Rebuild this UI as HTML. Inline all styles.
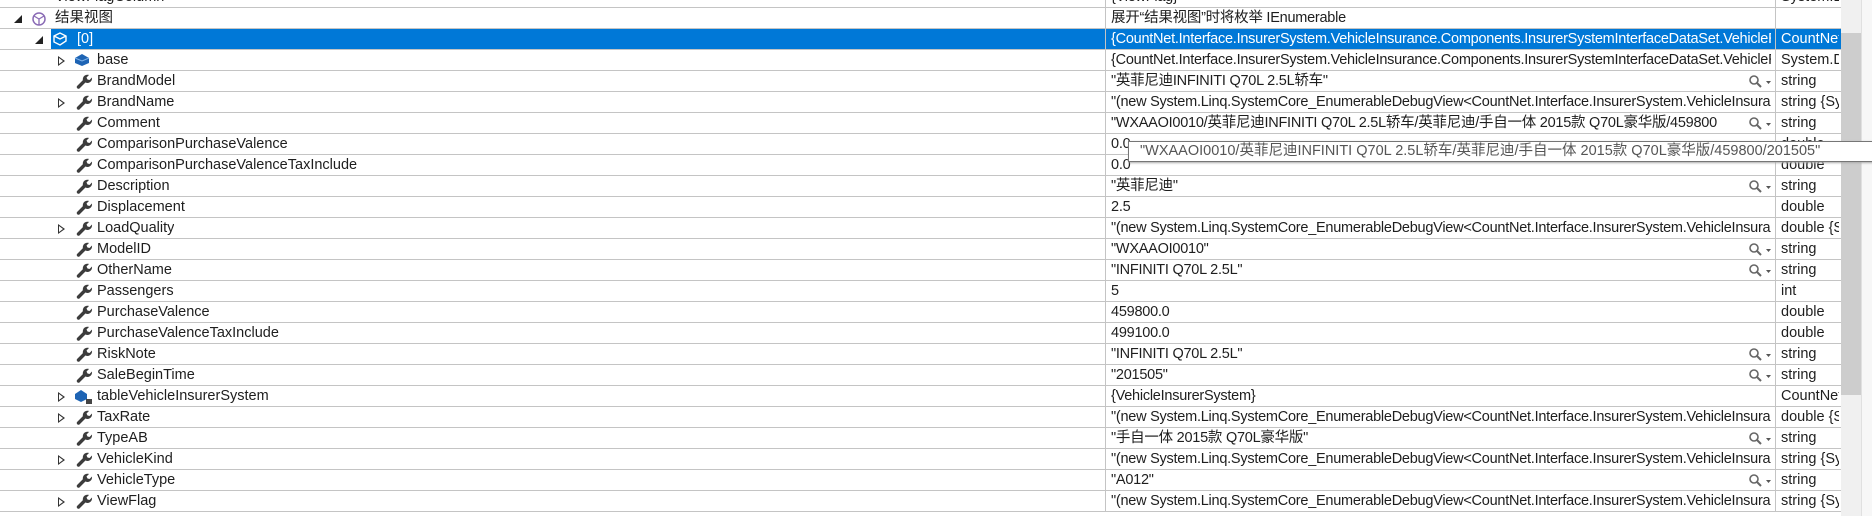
<!DOCTYPE html><html><head><meta charset="utf-8"><style>
body{margin:0;width:1872px;height:516px;overflow:hidden;background:#fff;font-family:"Liberation Sans","Noto Sans CJK SC",sans-serif;font-size:14.5px;color:#1e1e1e;position:relative}
.r{position:absolute;left:0;width:1841px;height:21px;border-bottom:1px solid #c4c4c4;box-sizing:border-box}
.r span{position:absolute;top:1px;height:18px;line-height:18px;white-space:nowrap;overflow:hidden}
.n{left:97px}.v{left:1111px;width:660px;letter-spacing:-0.25px}.t{left:1781px;width:58px}
.vl{position:absolute;top:0;height:512px;width:1px;background:#c4c4c4}
.tri{position:absolute;top:6px;width:0;height:0;border-top:5px solid transparent;border-bottom:5px solid transparent;border-left:7px solid #333}
.tri::after{content:"";position:absolute;left:-6px;top:-3px;border-top:3px solid transparent;border-bottom:3px solid transparent;border-left:4px solid #fff}
.ex{position:absolute;top:7px;width:0;height:0;border-left:8px solid transparent;border-bottom:8px solid #222}
.w{position:absolute;left:76px;top:2px}
.mg{position:absolute;left:1748px;top:3px}
.sel{background:#0078d7;color:#fff}
</style></head><body>
<div class="r" style="top:-13px"><span class="n" style="left:55px">ViewFlagColumn</span><span class="v">{ViewFlag}</span><span class="t">System.D</span></div>
<div id="rows"></div>
<div class="vl" style="left:1105px"></div><div class="vl" style="left:1775px"></div>
<div style="position:absolute;left:1841px;top:0;width:20px;height:516px;background:#f0f0f0"></div>
<div style="position:absolute;left:1841px;top:33px;width:20px;height:362px;background:#cdcdcd"></div>
<div style="position:absolute;left:1861px;top:0;width:11px;height:516px;background:#f7f7f7;border-left:1px solid #e0e0e0"></div>
<div style="position:absolute;left:1128px;top:141px;width:760px;height:21px;line-height:18px;background:#fff;border:1px solid #767676;color:#555;box-sizing:border-box;white-space:nowrap;padding:0 0 0 11px;box-shadow:1px 1px 2px #aaa">"WXAAOI0010/英菲尼迪INFINITI Q70L 2.5L轿车/英菲尼迪/手自一体 2015款 Q70L豪华版/459800/201505"</div>
<script>
const W='<svg class="w" width="17" height="16" viewBox="0 0 17 16"><path d="M2.5 14 L9 7.5" stroke="#3c3c3c" stroke-width="3.4" stroke-linecap="round"/><path d="M7 8 C6 4 9 1 13 2 L10.5 4.5 L11.5 6.5 L13.5 7 L16 4.5 C16.5 8.5 13 11 9.5 9.5Z" fill="#3c3c3c"/></svg>';
const M='<svg class="mg" width="26" height="14"><circle cx="6" cy="6" r="4" fill="none" stroke="#666" stroke-width="1.6"/><path d="M9 9 L13 13" stroke="#666" stroke-width="2"/><path d="M18 7 L23 7 L20.5 10Z" fill="#555"/></svg>';
const rows=[
['结果视图','展开“结果视图”时将枚举 IEnumerable','',0,'root'],
['[0]','{CountNet.Interface.InsurerSystem.VehicleInsurance.Components.InsurerSystemInterfaceDataSet.VehicleRow}','CountNet',0,'sel'],
['base','{CountNet.Interface.InsurerSystem.VehicleInsurance.Components.InsurerSystemInterfaceDataSet.VehicleRow}','System.Data',1,'base'],
['BrandModel','"英菲尼迪INFINITI Q70L 2.5L轿车"','string',0,'m'],
['BrandName','"(new System.Linq.SystemCore_EnumerableDebugView<CountNet.Interface.InsurerSystem.VehicleInsurance','string {System',1,''],
['Comment','"WXAAOI0010/英菲尼迪INFINITI Q70L 2.5L轿车/英菲尼迪/手自一体 2015款 Q70L豪华版/459800','string',0,'m'],
['ComparisonPurchaseValence','0.0','double',0,''],
['ComparisonPurchaseValenceTaxInclude','0.0','double',0,''],
['Description','"英菲尼迪"','string',0,'m'],
['Displacement','2.5','double',0,''],
['LoadQuality','"(new System.Linq.SystemCore_EnumerableDebugView<CountNet.Interface.InsurerSystem.VehicleInsurance','double {System',1,''],
['ModelID','"WXAAOI0010"','string',0,'m'],
['OtherName','"INFINITI Q70L 2.5L"','string',0,'m'],
['Passengers','5','int',0,''],
['PurchaseValence','459800.0','double',0,''],
['PurchaseValenceTaxInclude','499100.0','double',0,''],
['RiskNote','"INFINITI Q70L 2.5L"','string',0,'m'],
['SaleBeginTime','"201505"','string',0,'m'],
['tableVehicleInsurerSystem','{VehicleInsurerSystem}','CountNet',1,'tbl'],
['TaxRate','"(new System.Linq.SystemCore_EnumerableDebugView<CountNet.Interface.InsurerSystem.VehicleInsurance','double {System',1,''],
['TypeAB','"手自一体 2015款 Q70L豪华版"','string',0,'m'],
['VehicleKind','"(new System.Linq.SystemCore_EnumerableDebugView<CountNet.Interface.InsurerSystem.VehicleInsurance','string {System',1,''],
['VehicleType','"A012"','string',0,'m'],
['ViewFlag','"(new System.Linq.SystemCore_EnumerableDebugView<CountNet.Interface.InsurerSystem.VehicleInsurance','string {System',1,'']];
let h='';
rows.forEach((r,i)=>{
 const top=8+21*i;let ic='',nl=97,vw=r[4]=='m'?'width:634px':'';
 if(r[4]=='root'){ic='<div class="ex" style="left:14px"></div><svg style="position:absolute;left:31px;top:3px" width="16" height="16"><circle cx="8" cy="8" r="6" fill="none" stroke="#8a6bb5" stroke-width="1.5"/><path d="M8 8 L3 5 M8 8 L13 5 M8 8 L8 14" stroke="#8a6bb5" stroke-width="1.3"/></svg>';nl=55;}
 else if(r[4]=='sel'){ic='<div style="position:absolute;left:51px;top:0;width:1054px;height:20px;background:#0078d7"></div><div class="ex" style="left:35px"></div><svg style="position:absolute;left:52px;top:3px" width="16" height="14"><path d="M2 4 L8 1 L14 4 L14 9 L8 13 L2 10Z M2 4 L8 7 L14 4" fill="none" stroke="#fff" stroke-width="1.4"/></svg>';nl=77;}
 else if(r[4]=='base'){ic='<svg style="position:absolute;left:74px;top:3px" width="16" height="14"><path d="M1 5 L8 1 L15 5 L15 10 L8 13 L1 10Z" fill="#1e64b4"/><path d="M1 5 L8 8 L15 5" stroke="#7fb3ea" fill="none"/></svg>';}
 else if(r[4]=='tbl'){ic='<svg style="position:absolute;left:74px;top:3px" width="20" height="16"><path d="M1 5 L7 1 L13 5 L13 10 L7 13 L1 10Z" fill="#1e64b4"/><rect x="12" y="10" width="6" height="5" fill="#444"/></svg>';}
 else ic=W;
 if(r[3])ic='<div class="tri" style="left:58px"></div>'+ic;
 const cls=r[4]=='sel'?' sel':'';
 h+=`<div class="r" style="top:${top}px">${ic}<span class="n" style="left:${nl}px;${r[4]=='sel'?'color:#fff':''}">${r[0].replace(/</g,'&lt;')}</span><div class="${cls}" style="position:absolute;left:1106px;top:0;width:735px;height:20px"></div><span class="v" style="${vw}">${r[1].replace(/</g,'&lt;')}</span>${r[4]=='m'?M:''}<span class="t">${r[2]}</span></div>`;
});
document.getElementById('rows').outerHTML=h;
</script>
<style>.r .sel~span{color:#fff}</style>
</body></html>
